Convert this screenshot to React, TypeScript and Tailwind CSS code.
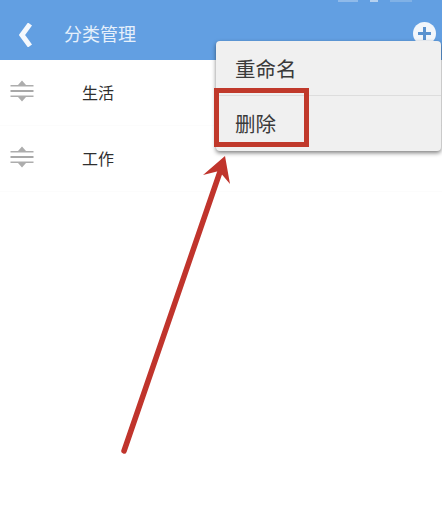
const DragIcon = () => (
  <svg width="24" height="24" viewBox="0 0 24 24" className="shrink-0">
    <path d="M0.5 6 H8 L12 1.5 L16 6 H23.5 V7.5 H0.5 Z" fill="#adadad" />
    <rect x="0.5" y="11" width="23" height="2" fill="#a8a8a8" />
    <path d="M0.5 16.5 H23.5 V18 H16 L12 22.5 L8 18 H0.5 Z" fill="#adadad" />
  </svg>
);

const Row = ({ label }: { label: string }) => (
  <div className="flex h-[66px] items-center gap-[48px] border-b border-[#fcfcfc] pb-[4px] pl-[10px]">
    <DragIcon />
    <span className="pt-[6px] text-[16px] text-[#2f2f2f]">{label}</span>
  </div>
);

const App = () => {
  return (
    <div
      className="relative h-[530px] w-[442px] overflow-hidden bg-white"
      style={{ fontFamily: '"Liberation Sans", "Noto Sans CJK SC", sans-serif' }}
    >
      <header className="relative flex h-[60px] items-center gap-[31px] bg-[#629fe2] pl-[19px] pt-[10px]">
        <svg width="14" height="24" viewBox="0 0 14 24">
          <path d="M11 1 L3 12 L11 23" fill="none" stroke="#f4f8fd" strokeWidth="5" />
        </svg>
        <span className="text-[18px] text-[#e6f0fb]">分类管理</span>
        {/* cropped status bar */}
        <div className="absolute right-[30px] top-0 flex gap-[12px]">
          <div className="h-[2px] w-[20px] bg-[#8fbaea]" />
          <div className="h-[2px] w-[8px] bg-[#b5d1f0]" />
          <div className="h-[2px] w-[22px] bg-[#80b1e6]" />
        </div>
        <div className="absolute right-[6px] top-[22px] flex h-[23px] w-[23px] items-center justify-center rounded-full bg-[#f2f6fb]">
          <svg width="13" height="13" viewBox="0 0 13 13">
            <path d="M6.5 0 V13 M0 6.5 H13" stroke="#5a92cf" strokeWidth="3" />
          </svg>
        </div>
      </header>

      <main>
        <Row label="生活" />
        <Row label="工作" />
      </main>

      {/* popup menu */}
      <div className="absolute left-[216px] top-[41px] w-[225px] rounded-sm bg-[#f0f0f0] shadow-[0_2px_4px_rgba(0,0,0,0.5)]">
        <div className="flex h-[55px] items-center border-b border-[#dddddd] pl-[19px] pt-[4px] text-[20.5px] text-[#3a3a3a]">重命名</div>
        <div className="flex h-[55px] items-center pl-[19px] pt-[4px] text-[20.5px] text-[#3a3a3a]">删除</div>
      </div>

      {/* annotations */}
      <div className="absolute left-[214px] top-[88px] h-[59px] w-[95px] border-[5px] border-[#c0392b]" />
      <svg width="442" height="530" className="absolute left-0 top-0">
        <path d="M124 451 L222 166" stroke="#c0342c" strokeWidth="5.5" strokeLinecap="round" fill="none" />
        <path d="M225 156 L203 175 L219 171 L230 184 Z" fill="#c0342c" />
      </svg>
    </div>
  );
};

export default App;
